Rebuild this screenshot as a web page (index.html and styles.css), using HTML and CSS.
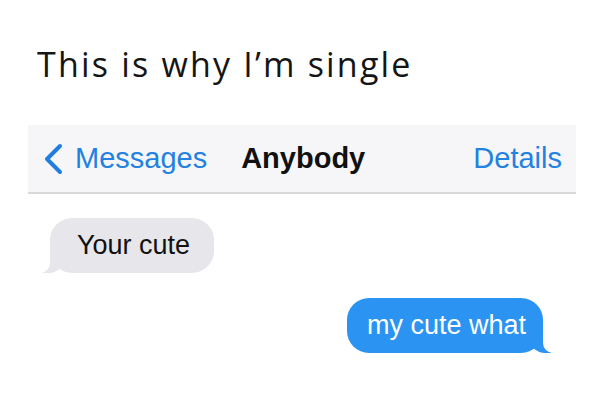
FILE: index.html
```html
<!DOCTYPE html>
<html lang="en">
<head>
  <meta charset="UTF-8" />
  <title>This is why I'm single</title>
  <link rel="stylesheet" href="styles.css">
</head>
<body>

<h1 class="caption">This is why I’m single</h1>

<div class="chat">
  <div class="navbar">
    <div class="nav-back">
      <svg class="chevron" width="22" height="32" viewBox="0 0 22 32">
        <polyline points="18,3 5,16 18,29" fill="none" stroke="#1f7ee0" stroke-width="4" stroke-linecap="round" stroke-linejoin="round" />
      </svg>
      <span>Messages</span>
    </div>
    <div class="nav-title">Anybody</div>
    <div class="nav-link">Details</div>
  </div>

  <div class="thread">
    <div class="bubble them">Your cute</div>
    <div class="bubble me">my cute what</div>
  </div>
</div>

</body>
</html>
```

FILE: styles.css
```css
html, body {
  margin: 0;
  padding: 0;
  background: #fff;
  font-family: 'Liberation Sans', Arial, sans-serif;
  color: #111;
}

.caption {
  margin: 0;
  padding: 44px 0 0 37px;
  height: 83px;
  box-sizing: border-box;
  font-family: 'Open Sans', sans-serif;
  font-weight: 400;
  font-size: 34px;
  line-height: 40px;
  letter-spacing: 2.2px;
  color: #151515;
}

.chat {
  width: 548px;
  margin-left: 28px;
}

.navbar {
  display: flex;
  align-items: center;
  height: 67px;
  margin-top: 42px;
  background: #f6f6f8;
  border-bottom: 2px solid #d8d8da;
  font-size: 29px;
}

.nav-back {
  display: flex;
  align-items: center;
  gap: 11px;
  padding-left: 14px;
  color: #2381e2;
}

.chevron {
  margin-top: 1px;
}

.nav-title {
  margin-left: 34px;
  font-weight: bold;
  color: #111;
}

.nav-link {
  margin-left: auto;
  padding-right: 14px;
  color: #2381e2;
}

.thread {
  display: flex;
  flex-direction: column;
  gap: 25px;
  padding: 24px 33px 0 22px;
}

.bubble {
  position: relative;
  height: 55px;
  box-sizing: border-box;
  padding: 0 24px 0 27px;
  line-height: 55px;
  font-size: 27px;
  border-radius: 22px;
}

.bubble.them {
  align-self: flex-start;
  background: #e6e6eb;
  color: #111;
}

.bubble.me {
  align-self: flex-end;
  background: #2b93f2;
  color: #fff;
  padding: 0 17px 0 20px;
}

.bubble::before,
.bubble::after {
  content: "";
  position: absolute;
  bottom: 0;
  height: 22px;
}

.bubble.them::before {
  left: -7px;
  width: 22px;
  background: #e6e6eb;
  border-bottom-right-radius: 16px;
}

.bubble.them::after {
  left: -12px;
  width: 12px;
  background: #fff;
  border-bottom-right-radius: 10px;
}

.bubble.me::before {
  right: -8px;
  width: 22px;
  background: #2b93f2;
  border-bottom-left-radius: 16px;
}

.bubble.me::after {
  right: -14px;
  width: 14px;
  background: #fff;
  border-bottom-left-radius: 10px;
}
```
